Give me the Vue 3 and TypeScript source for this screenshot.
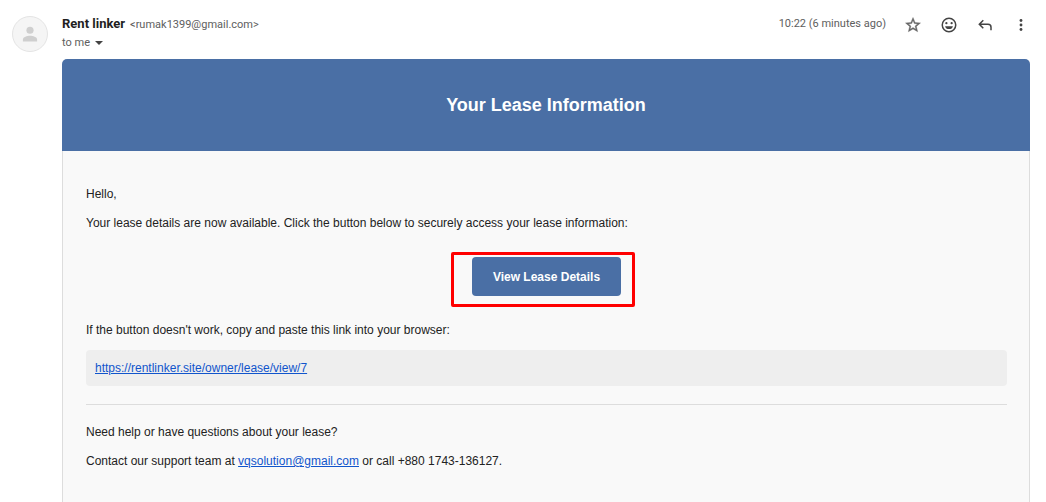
<script setup lang="ts">
const leaseUrl = 'https://rentlinker.site/owner/lease/view/7'
const supportEmail = 'vqsolution@gmail.com'
</script>

<template>
  <article class="message">
    <div class="avatar">
      <svg viewBox="0 0 24 24" width="20" height="20" aria-hidden="true">
        <circle cx="12" cy="7.5" r="4.3" />
        <path d="M3.5 21v-2.500c0-3.200 5-4.500 8.500-4.500s8.500 1.300 8.500 4.500V21z" />
      </svg>
    </div>

    <div class="main">
      <header class="meta">
        <div class="sender">
          <div class="from">
            <span class="name">Rent linker</span>
            <span class="address">&lt;rumak1399@gmail.com&gt;</span>
          </div>
          <button class="recipient" type="button">
            to me
            <svg viewBox="0 0 8 4" width="8" height="4" aria-hidden="true">
              <path d="M0 0h8L4 4z" />
            </svg>
          </button>
        </div>
        <div class="actions">
          <time class="time">10:22 (6 minutes ago)</time>
          <button type="button" class="icon" aria-label="Star">
            <svg viewBox="0 0 24 24" width="18" height="18" class="star">
              <path d="M22 9.240l-7.190-.620L12 2 9.190 8.630 2 9.240l5.460 4.730L5.820 21 12 17.270 18.180 21l-1.630-7.030L22 9.240zM12 15.400l-3.760 2.270 1-4.280-3.320-2.880 4.380-.380L12 6.100l1.710 4.040 4.380.380-3.320 2.880 1 4.280L12 15.400z" />
            </svg>
          </button>
          <button type="button" class="icon" aria-label="Add reaction">
            <svg viewBox="0 0 24 24" width="18" height="18">
              <path fill-rule="evenodd" d="M12 2a10 10 0 1 0 0 20 10 10 0 0 0 0-20zm0 2a8 8 0 1 1 0 16 8 8 0 0 1 0-16z" />
              <circle cx="8.500" cy="9.500" r="1.500" />
              <circle cx="15.500" cy="9.500" r="1.500" />
              <path d="M6.800 13.500h10.400a5.300 4.800 0 0 1-10.400 0z" />
            </svg>
          </button>
          <button type="button" class="icon" aria-label="Reply">
            <svg viewBox="0 0 24 24" width="18" height="18">
              <path d="M19 19v-4a3 3 0 0 0-3-3H6.830l3.590 3.590L9 17l-6-6 6-6 1.420 1.410L6.830 10H16a5 5 0 0 1 5 5v4z" />
            </svg>
          </button>
          <button type="button" class="icon" aria-label="More">
            <svg viewBox="0 0 24 24" width="18" height="18">
              <circle cx="12" cy="6" r="1.900" />
              <circle cx="12" cy="12" r="1.900" />
              <circle cx="12" cy="18" r="1.900" />
            </svg>
          </button>
        </div>
      </header>

      <section class="mail">
        <h1 class="banner">Your Lease Information</h1>
        <div class="body">
          <p>Hello,</p>
          <p>Your lease details are now available. Click the button below to securely access your lease information:</p>
          <div class="cta">
            <a class="view" :href="leaseUrl">View Lease Details</a>
            <span class="highlight" aria-hidden="true"></span>
          </div>
          <p>If the button doesn't work, copy and paste this link into your browser:</p>
          <div class="link-box">
            <a :href="leaseUrl">{{ leaseUrl }}</a>
          </div>
          <footer class="help">
            <p>Need help or have questions about your lease?</p>
            <p>
              Contact our support team at
              <a :href="'mailto:' + supportEmail">{{ supportEmail }}</a>
              or call +880 1743-136127.
            </p>
          </footer>
        </div>
      </section>
    </div>
  </article>
</template>

<style>
html,
body,
#app {
  height: 100%;
}
body {
  margin: 0;
  background: #fff;
}
</style>

<style scoped>
.message {
  display: flex;
  gap: 14px;
  box-sizing: border-box;
  min-height: 100%;
  padding: 16px 16px 0 12px;
  font-family: Roboto, "Liberation Sans", sans-serif;
}
.avatar {
  display: flex;
  align-items: center;
  justify-content: center;
  flex: none;
  box-sizing: border-box;
  width: 36px;
  height: 36px;
  border: 1px solid #e4e4e4;
  border-radius: 50%;
  background: #f5f5f5;
  fill: #cfcfcf;
}
.main {
  display: flex;
  flex-direction: column;
  flex: 1;
  min-width: 0;
}
.meta {
  display: flex;
  justify-content: space-between;
  align-items: flex-start;
  height: 43px;
}
.from {
  display: flex;
  align-items: baseline;
  gap: 5px;
  line-height: 16px;
}
.name {
  font-size: 13px;
  font-weight: 700;
  color: #1f1f1f;
}
.address,
.time,
.recipient {
  font-size: 11px;
  color: #5e5e5e;
}
button {
  border: 0;
  padding: 0;
  background: none;
  font-family: inherit;
  cursor: pointer;
}
.recipient {
  display: flex;
  align-items: center;
  gap: 5px;
  line-height: 20px;
  fill: #444;
}
.actions {
  display: flex;
  align-items: flex-start;
}
.time {
  margin-right: 18px;
  line-height: 16px;
}
.icon {
  display: flex;
  margin-right: 18px;
  fill: #444;
}
.icon:last-child {
  margin-right: 0;
}
.star {
  fill: #666;
  stroke: #666;
  stroke-width: 0.5;
}
.mail {
  display: flex;
  flex-direction: column;
  flex: 1;
  font-family: "Liberation Sans", Arial, sans-serif;
  font-size: 12px;
  line-height: 18px;
  color: #222;
}
.banner {
  margin: 0;
  padding: 32px 24px;
  border-radius: 5px 5px 0 0;
  background: #4a6fa5;
  color: #fff;
  font-size: 18px;
  line-height: 28px;
  text-align: center;
}
.body {
  flex: 1;
  padding: 34px 22px 14px 23px;
  border: 1px solid #ddd;
  border-width: 0 1px;
  background: #f9f9f9;
}
p {
  margin: 0 0 11px;
}
a {
  color: #15c;
}
.cta {
  position: relative;
  width: max-content;
  margin: 25px auto;
}
.view {
  display: block;
  padding: 11px 21px 10px;
  border-radius: 4px;
  background: #4a6fa5;
  color: #fff;
  font-weight: 700;
  text-decoration: none;
}
.highlight {
  position: absolute;
  inset: -5px -14px -11px -21px;
  border: 3px solid #f00;
  border-radius: 2px;
  pointer-events: none;
}
.link-box {
  padding: 9px;
  border-radius: 4px;
  background: #eee;
}
.help {
  margin-top: 18px;
  padding-top: 18px;
  border-top: 1px solid #ddd;
}
</style>
